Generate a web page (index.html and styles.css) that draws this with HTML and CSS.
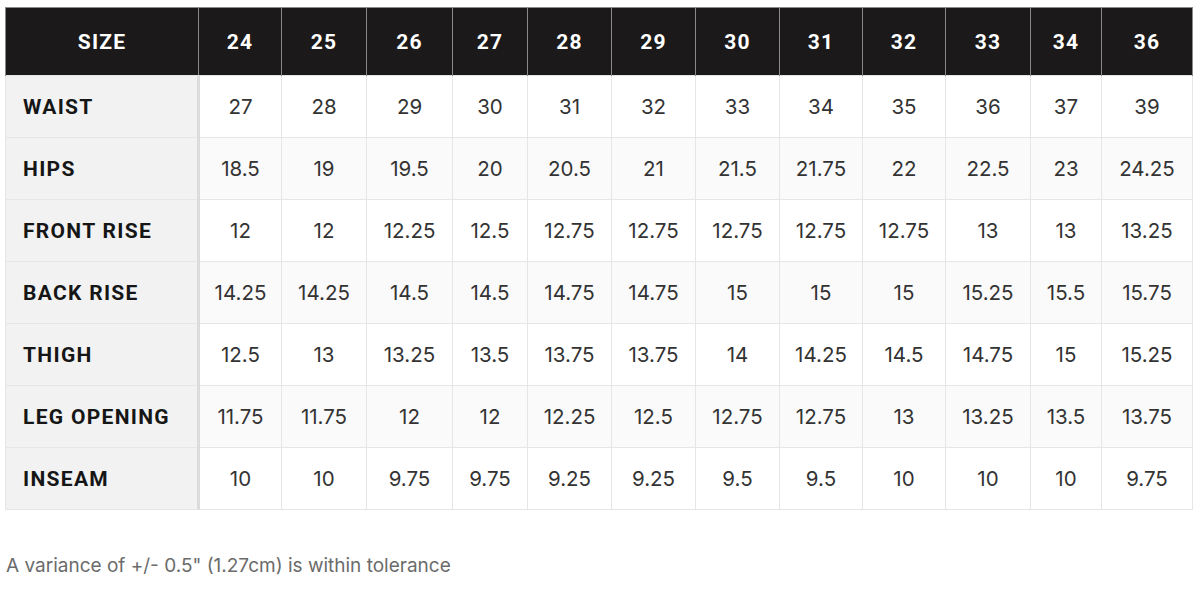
FILE: index.html
```html
<!DOCTYPE html>
<html lang="en">
<head>
<meta charset="utf-8">
<title>Size Chart</title>
<link rel="stylesheet" href="styles.css">
</head>
<body>
<div class="page">
  <table class="chart">
    <colgroup>
      <col class="c-label">
      <col style="width:83px"><col style="width:85px"><col style="width:86px"><col style="width:75px">
      <col style="width:84px"><col style="width:84px"><col style="width:84px"><col style="width:83px">
      <col style="width:83px"><col style="width:85px"><col style="width:71px"><col style="width:91px">
    </colgroup>
    <thead>
      <tr>
        <th>SIZE</th><th>24</th><th>25</th><th>26</th><th>27</th><th>28</th><th>29</th><th>30</th><th>31</th><th>32</th><th>33</th><th>34</th><th>36</th>
      </tr>
    </thead>
    <tbody>
      <tr><th>WAIST</th><td>27</td><td>28</td><td>29</td><td>30</td><td>31</td><td>32</td><td>33</td><td>34</td><td>35</td><td>36</td><td>37</td><td>39</td></tr>
      <tr><th>HIPS</th><td>18.5</td><td>19</td><td>19.5</td><td>20</td><td>20.5</td><td>21</td><td>21.5</td><td>21.75</td><td>22</td><td>22.5</td><td>23</td><td>24.25</td></tr>
      <tr><th>FRONT RISE</th><td>12</td><td>12</td><td>12.25</td><td>12.5</td><td>12.75</td><td>12.75</td><td>12.75</td><td>12.75</td><td>12.75</td><td>13</td><td>13</td><td>13.25</td></tr>
      <tr><th>BACK RISE</th><td>14.25</td><td>14.25</td><td>14.5</td><td>14.5</td><td>14.75</td><td>14.75</td><td>15</td><td>15</td><td>15</td><td>15.25</td><td>15.5</td><td>15.75</td></tr>
      <tr><th>THIGH</th><td>12.5</td><td>13</td><td>13.25</td><td>13.5</td><td>13.75</td><td>13.75</td><td>14</td><td>14.25</td><td>14.5</td><td>14.75</td><td>15</td><td>15.25</td></tr>
      <tr><th>LEG OPENING</th><td>11.75</td><td>11.75</td><td>12</td><td>12</td><td>12.25</td><td>12.5</td><td>12.75</td><td>12.75</td><td>13</td><td>13.25</td><td>13.5</td><td>13.75</td></tr>
      <tr><th>INSEAM</th><td>10</td><td>10</td><td>9.75</td><td>9.75</td><td>9.25</td><td>9.25</td><td>9.5</td><td>9.5</td><td>10</td><td>10</td><td>10</td><td>9.75</td></tr>
    </tbody>
  </table>
  <p class="note">A variance of +/- 0.5" (1.27cm) is within tolerance</p>
</div>
</body>
</html>
```

FILE: styles.css
```css
html, body {
  margin: 0;
  padding: 0;
  background: #ffffff;
}

.page {
  padding: 7px 8px 0 5px;
  font-family: "Inter", "Liberation Sans", sans-serif;
}

.chart {
  width: 1187px;
  table-layout: fixed;
  border-collapse: collapse;
  border: 1px solid #e6e6e6;
}

.c-label {
  width: 193px;
}

.chart thead th {
  background: #1b1919;
  color: #ffffff;
  font-family: "Roboto", "Liberation Sans", sans-serif;
  font-weight: 700;
  font-size: 21px;
  letter-spacing: 1.2px;
  text-align: center;
  height: 67px;
  padding: 0;
  border-left: 1px solid #8a8a8a;
  border-right: 1px solid #8a8a8a;
  border-top: 1px solid #8a8a8a;
}

.chart tbody th {
  background: #f2f2f2;
  color: #161616;
  font-family: "Roboto", "Liberation Sans", sans-serif;
  font-weight: 700;
  font-size: 21px;
  letter-spacing: 1.3px;
  text-align: left;
  padding: 0 0 0 17px;
  height: 61px;
  border-top: 1px solid #e6e6e6;
  border-right: 3px solid #dcdcdc;
}

.chart tbody td {
  text-align: center;
  font-size: 20.5px;
  color: #333333;
  height: 61px;
  padding: 0;
  border: 1px solid #e6e6e6;
}

.chart tbody tr:nth-child(even) td {
  background: #fafafa;
}

.note {
  margin: 44px 0 0 1px;
  font-size: 19px;
  color: #6b6b6b;
}
```
